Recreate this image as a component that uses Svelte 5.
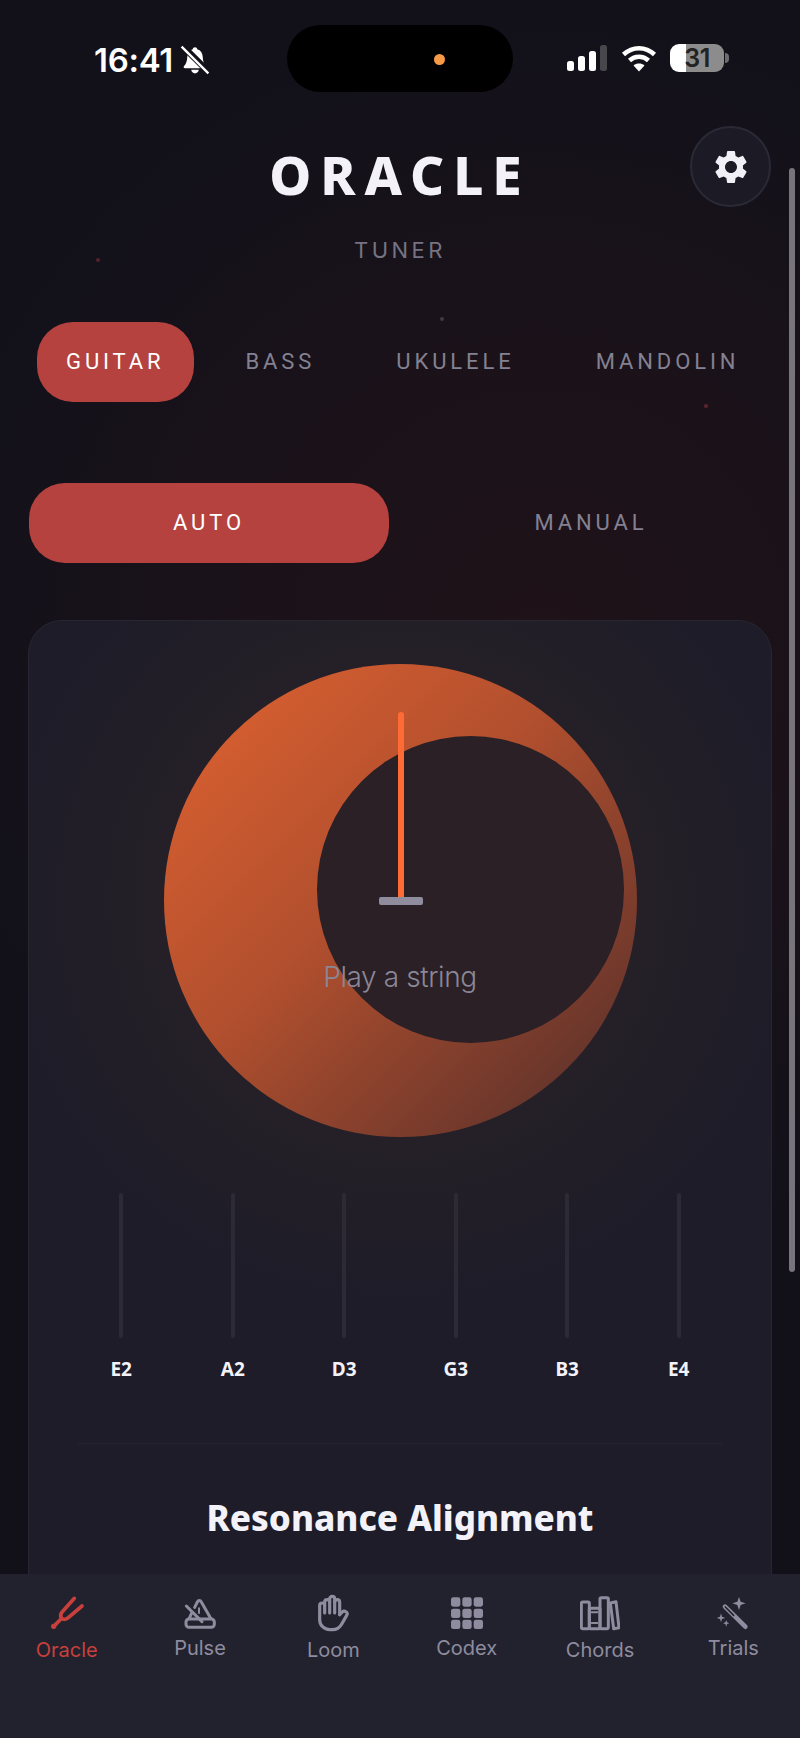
<script>
  const tabs = ['Guitar', 'Bass', 'Ukulele', 'Mandolin'];
  const strings = ['E2', 'A2', 'D3', 'G3', 'B3', 'E4'];
  const motes = [
    { x: 96, y: 258, c: '#5a1f2c' },
    { x: 440, y: 317, c: '#3c3a44' },
    { x: 704, y: 404, c: '#5e2530' }
  ];
</script>

<div class="screen">
  {#each motes as m}
    <i class="mote" style="left:{m.x}px;top:{m.y}px;background:{m.c}"></i>
  {/each}

  <div class="status">
    <div class="clock">
      <span class="time">16:41</span>
      <svg class="bell" viewBox="0 0 28 28" fill="#fff">
        <path d="M14 2c-1.300 0-2 .9-2.100 1.900C8.600 4.800 7 7.500 6.800 11c-.2 4-.9 6.500-3 8.500-.8.8-.4 2.200 1 2.200h18.400c1.400 0 1.800-1.400 1-2.200-2.100-2-2.800-4.500-3-8.500-.2-3.500-1.800-6.200-5.100-7.100C16 2.900 15.300 2 14 2z"/>
        <path d="M10.500 23.200h7c-.2 2-1.600 3.300-3.500 3.300s-3.300-1.300-3.500-3.300z"/>
        <path d="M3 1.500 27 25.500" stroke="#12111a" stroke-width="6"/>
        <path d="M1.500 1.500 26.500 26.500" stroke="#fff" stroke-width="2.200"/>
      </svg>
    </div>
    <div class="island"><b></b></div>
    <div class="sys">
      <svg class="signal" viewBox="0 0 40 26">
        <rect x="0" y="16" width="7" height="10" rx="2.500" fill="#fff"/>
        <rect x="11" y="11" width="7" height="15" rx="2.500" fill="#fff"/>
        <rect x="22" y="6" width="7" height="20" rx="2.500" fill="#fff"/>
        <rect x="33" y="0" width="7" height="26" rx="2.500" fill="#48484c"/>
      </svg>
      <svg class="wifi" viewBox="0 0 36 27" fill="none" stroke="#fff" stroke-width="4.500">
        <path d="M2.500 9.500C11.500 1 24.500 1 33.500 9.500"/>
        <path d="M8.500 15.500c5.500-5 13.500-5 19 0"/>
        <path d="M18 26.500l-5.500-6c3.200-2.600 7.800-2.600 11 0z" fill="#fff" stroke="none"/>
      </svg>
      <div class="battery"><span>31</span></div>
    </div>
  </div>

  <header class="head">
    <div></div>
    <div class="titles">
      <h1>ORACLE</h1>
      <p>TUNER</p>
    </div>
    <button class="gear" aria-label="Settings">
      <svg viewBox="0 0 24 24" fill="#f1f0f6"><path d="M19.140 12.940c.04-.3.060-.61.060-.94 0-.32-.02-.64-.07-.94l2.030-1.580c.18-.14.23-.41.120-.61l-1.920-3.320c-.12-.22-.37-.29-.59-.22l-2.390.96c-.5-.38-1.030-.7-1.620-.94l-.36-2.540c-.04-.24-.24-.41-.48-.41h-3.840c-.24 0-.43.170-.47.41l-.36 2.540c-.59.24-1.130.57-1.620.94l-2.390-.96c-.22-.08-.47 0-.59.22L2.740 8.870c-.12.21-.08.47.12.61l2.030 1.580c-.05.3-.09.63-.09.94s.02.64.07.94l-2.030 1.580c-.18.14-.23.41-.12.61l1.920 3.320c.12.22.37.29.59.22l2.390-.96c.5.38 1.030.7 1.620.94l.36 2.540c.05.24.24.41.48.41h3.840c.24 0 .44-.17.47-.41l.36-2.540c.59-.24 1.130-.56 1.620-.94l2.390.96c.22.08.47 0 .59-.22l1.920-3.320c.12-.22.07-.47-.12-.61l-2.010-1.580zM12 15.600c-1.980 0-3.600-1.620-3.600-3.600s1.620-3.600 3.600-3.600 3.600 1.620 3.600 3.600-1.620 3.600-3.600 3.600z"/></svg>
    </button>
  </header>

  <div class="tabs">
    {#each tabs as t, i}
      <span class="pill" class:on={i === 0}>{t.toUpperCase()}</span>
    {/each}
  </div>

  <div class="modes">
    <span class="pill on">AUTO</span>
    <span class="pill">MANUAL</span>
  </div>

  <section class="card">
    <div class="dial">
      <div class="hole"></div>
      <div class="needle"></div>
      <div class="base"></div>
      <div class="hint">Play a string</div>
    </div>

    <div class="strings">
      {#each strings as s}
        <div class="string"><i></i><span>{s}</span></div>
      {/each}
    </div>

    <div class="rule"></div>
    <h2>Resonance Alignment</h2>
  </section>

  <nav class="nav">
    <div class="item active low">
      <svg viewBox="140 100 120 120" fill="none" stroke="currentColor" stroke-width="11" stroke-linecap="round" stroke-linejoin="round">
        <path d="M160 200 182 178"/>
        <path d="M222 116 186 156c-6 7-6 14-3 21 7 3 14 3 21-3L245 139"/>
        <circle cx="160" cy="200" r="8" fill="currentColor" stroke="none"/>
      </svg>
      <span>Oracle</span>
    </div>
    <div class="item">
      <svg viewBox="540 100 120 120" fill="none" stroke="currentColor" stroke-width="9" stroke-linecap="round" stroke-linejoin="round">
        <path d="M584 143 592 127c3-6 9-6 12 0L632 176"/>
        <path d="M575 160 568 176"/>
        <rect x="558" y="178" width="85" height="25" rx="9"/>
        <path d="M559 139 606 186"/>
        <path d="M597 146v14" stroke-width="6"/>
      </svg>
      <span>Pulse</span>
    </div>
    <div class="item low">
      <svg viewBox="0 0 24 24" fill="none" stroke="currentColor" stroke-width="1.900" stroke-linecap="round" stroke-linejoin="round">
        <g transform="translate(24 0) scale(-1 1)">
          <path d="M8 13v-7.500a1.500 1.500 0 0 1 3 0v6.500"/>
          <path d="M11 5.500v-2a1.500 1.500 0 1 1 3 0v8.500"/>
          <path d="M14 5.500a1.500 1.500 0 0 1 3 0v6.500"/>
          <path d="M17 7.500a1.500 1.500 0 0 1 3 0v8.500a6 6 0 0 1-6 6h-2h.208a6 6 0 0 1-5.012-2.700a69.740 69.740 0 0 1-.196-.3c-.312-.479-1.407-2.388-3.286-5.728a1.500 1.500 0 0 1 .536-2.022a1.867 1.867 0 0 1 2.280.28l1.470 1.470"/>
        </g>
      </svg>
      <span>Loom</span>
    </div>
    <div class="item">
      <svg viewBox="140 100 120 120" fill="currentColor">
        <rect x="152" y="113" width="28" height="28" rx="7"/><rect x="186" y="113" width="28" height="28" rx="7"/><rect x="220" y="113" width="28" height="28" rx="7"/>
        <rect x="152" y="147" width="28" height="28" rx="7"/><rect x="186" y="147" width="28" height="28" rx="7"/><rect x="220" y="147" width="28" height="28" rx="7"/>
        <rect x="152" y="180" width="28" height="28" rx="7"/><rect x="186" y="180" width="28" height="28" rx="7"/><rect x="220" y="180" width="28" height="28" rx="7"/>
      </svg>
      <span>Codex</span>
    </div>
    <div class="item low">
      <svg viewBox="540 100 120 120" fill="none" stroke="currentColor" stroke-width="9" stroke-linejoin="round" stroke-linecap="round">
        <rect x="544" y="127" width="24" height="80" rx="4"/>
        <rect x="568" y="146" width="32" height="61" rx="3"/>
        <rect x="600" y="114" width="25" height="93" rx="4"/>
        <path d="M631 130l17-4 9 78-16 3z"/>
        <path d="M575 158h17M575 190h17" stroke-width="6"/>
      </svg>
      <span>Chords</span>
    </div>
    <div class="item">
      <svg viewBox="940 100 120 120" fill="none" stroke="currentColor" stroke-linecap="round">
        <path d="M976 141 1037 201" stroke-width="14"/>
        <path d="M977 142 1002 167" stroke="#22222e" stroke-width="5"/>
        <path fill="currentColor" stroke="none" d="M1018 112l5 14 15 5-15 5-5 15-5-15-15-5 15-5z"/>
        <path fill="currentColor" stroke="none" d="M964 161l3 10 10 4-10 3-3 10-3-10-10-3 10-4z"/>
        <path fill="currentColor" stroke="none" d="M980 181l2 7 7 3-7 2-2 8-3-8-7-2 7-3z"/>
      </svg>
      <span>Trials</span>
    </div>
  </nav>

  <div class="scrollbar"></div>
</div>

<style>
  :global(body) {
    margin: 0;
    background: #12111a;
  }

  .screen {
    position: relative;
    width: 800px;
    height: 1738px;
    overflow: hidden;
    font-family: Inter, "Liberation Sans", sans-serif;
    background:
      radial-gradient(circle 620px at 540px 640px, rgba(100, 25, 20, 0.16) 0%, rgba(100, 25, 20, 0.11) 45%, rgba(100, 25, 20, 0) 100%),
      #12111a;
  }

  .mote {
    position: absolute;
    width: 4px;
    height: 4px;
    border-radius: 50%;
  }

  .status {
    position: relative;
    display: flex;
    align-items: flex-start;
    justify-content: space-between;
    height: 126px;
    padding: 0 76px 0 94px;
    box-sizing: border-box;
  }

  .clock {
    display: flex;
    align-items: center;
    gap: 7px;
    margin-top: 42px;
  }

  .time {
    color: #fff;
    font: 600 33px/36px Inter, sans-serif;
    letter-spacing: -0.3px;
  }

  .bell {
    width: 30px;
    height: 30px;
  }

  .island {
    position: absolute;
    left: 287px;
    top: 25px;
    width: 226px;
    height: 67px;
    border-radius: 34px;
    background: #000;
  }

  .island b {
    position: absolute;
    left: 147px;
    top: 29px;
    width: 11px;
    height: 11px;
    border-radius: 50%;
    background: #f79a46;
  }

  .sys {
    display: flex;
    align-items: center;
    gap: 14px;
    margin-top: 44px;
  }

  .signal {
    width: 40px;
    height: 26px;
  }

  .wifi {
    width: 36px;
    height: 27px;
    margin-right: -1px;
  }

  .battery {
    position: relative;
    width: 54px;
    height: 28px;
    border-radius: 9px;
    background: linear-gradient(90deg, #fff 0 30%, #8c8c8c 30% 100%);
    text-align: center;
    color: #222;
    font: 600 25px/28px Inter, sans-serif;
    letter-spacing: -0.5px;
  }

  .battery::after {
    content: "";
    position: absolute;
    right: -5px;
    top: 9px;
    width: 4px;
    height: 10px;
    border-radius: 0 4px 4px 0;
    background: #6d6d6d;
  }

  .head {
    display: grid;
    grid-template-columns: 1fr auto 1fr;
    height: 196px;
    padding-right: 29px;
    padding-left: 29px;
  }

  .titles {
    text-align: center;
  }

  h1 {
    margin: 19px 0 0;
    height: 60px;
    color: #f3f2f8;
    font: 800 53px/60px "Noto Sans", sans-serif;
    letter-spacing: 9px;
  }

  .titles p {
    margin: 32px 0 0;
    color: #757382;
    font: 400 22px/26px Inter, sans-serif;
    letter-spacing: 3.500px;
  }

  .gear {
    justify-self: end;
    width: 81px;
    height: 81px;
    padding: 0;
    display: grid;
    place-items: center;
    border: 2px solid #2a2a36;
    border-radius: 50%;
    background: #1b1a25;
  }

  .gear svg {
    width: 40px;
    height: 40px;
  }

  .pill {
    display: flex;
    align-items: center;
    justify-content: center;
    height: 80px;
    border-radius: 36px;
    color: #838192;
    font: 400 22px/24px Roboto, sans-serif;
    letter-spacing: 3.900px;
  }

  .pill.on {
    background: #b5423f;
    color: #fff;
  }

  .tabs {
    display: flex;
    gap: 23px;
    padding-left: 37px;
  }

  .tabs .pill {
    padding: 0 29px;
  }

  .modes {
    display: grid;
    grid-template-columns: 360px 360px;
    gap: 22px;
    margin: 81px 0 57px;
    padding-left: 29px;
  }

  .card {
    box-sizing: border-box;
    width: 744px;
    height: 1200px;
    margin-left: 28px;
    padding-top: 43px;
    border: 1px solid #282731;
    border-radius: 34px;
    background:
      radial-gradient(circle 400px at 371px 280px, #2a2026 0%, #252027 60%, rgba(30, 29, 41, 0) 100%),
      #1d1c28;
  }

  .dial {
    position: relative;
    width: 473px;
    height: 473px;
    margin-left: 134.500px;
    border-radius: 50%;
    background: linear-gradient(135deg, #d85f30 8%, #b14f2e 45%, #5e322b 92%);
  }

  .hole {
    position: absolute;
    left: 153.500px;
    top: 72px;
    width: 307px;
    height: 307px;
    border-radius: 50%;
    background: #2a2026;
  }

  .needle {
    position: absolute;
    left: 234px;
    top: 48px;
    width: 6px;
    height: 186px;
    border-radius: 3px 3px 0 0;
    background: #ff6b35;
  }

  .base {
    position: absolute;
    left: 215px;
    top: 233px;
    width: 44px;
    height: 8px;
    border-radius: 2px;
    background: #8f8c9e;
  }

  .hint {
    position: absolute;
    left: 0;
    right: 0;
    top: 295px;
    text-align: center;
    color: #8a8796;
    font: 300 28px/36px Inter, sans-serif;
    letter-spacing: -0.4px;
  }

  .strings {
    display: grid;
    grid-template-columns: repeat(6, 111.500px);
    margin: 56px 0 0 36.500px;
  }

  .string {
    display: flex;
    flex-direction: column;
    align-items: center;
  }

  .string i {
    width: 4px;
    height: 145px;
    border-radius: 2px;
    background: #2b2a35;
  }

  .string span {
    margin-top: 19px;
    color: #f3f2f8;
    font: 700 19px/24px "Noto Sans", sans-serif;
  }

  .rule {
    height: 1px;
    margin: 62px 49px 0;
    background: #25242e;
  }

  h2 {
    margin: 51px 0 0;
    text-align: center;
    color: #f3f2f8;
    font: 800 35px/46px "Noto Sans", sans-serif;
  }

  .nav {
    position: absolute;
    left: 0;
    right: 0;
    bottom: 0;
    height: 164px;
    box-sizing: border-box;
    padding-top: 19px;
    display: grid;
    grid-template-columns: repeat(6, 1fr);
    background: #22222e;
  }

  .item {
    display: flex;
    flex-direction: column;
    align-items: center;
    color: #8e8c9e;
  }

  .item.active {
    color: #c8403c;
  }

  .item svg {
    width: 40px;
    height: 40px;
  }

  .item span {
    margin-top: 2px;
    font: 400 20px/26px Inter, sans-serif;
  }

  .item.low span {
    margin-top: 4px;
  }

  .scrollbar {
    position: absolute;
    left: 789px;
    top: 168px;
    width: 6px;
    height: 1104px;
    border-radius: 3px;
    background: #77757b;
  }
</style>
